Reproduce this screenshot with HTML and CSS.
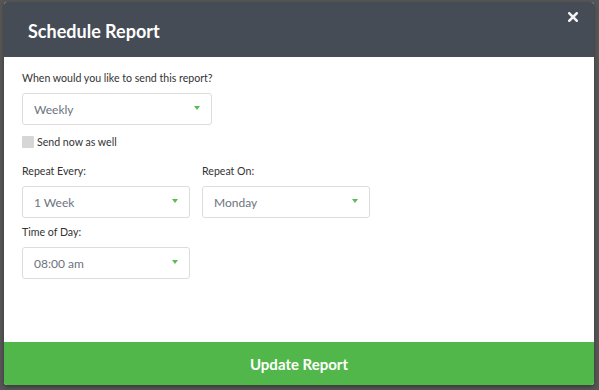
FILE: index.html
```html
<!DOCTYPE html>
<html>
<head>
<meta charset="utf-8">
<link rel="stylesheet" href="styles.css">
</head>
<body>
<div class="backdrop">
  <div class="modal">
    <div class="modal-header">
      <h1 class="title">Schedule Report</h1>
      <svg class="close" width="10" height="10" viewBox="0 0 10 10"><path d="M1.3 1.3L8.7 8.7M8.7 1.3L1.3 8.7" stroke="#f2f2f2" stroke-width="2.6" stroke-linecap="square"/></svg>
    </div>
    <div class="modal-body">
      <div class="label">When would you like to send this report?</div>
      <div class="select wide"><span>Weekly</span><span class="caret"></span></div>
      <label class="check-row"><span class="checkbox"></span><span>Send now as well</span></label>
      <div class="row">
        <div class="field">
          <div class="label">Repeat Every:</div>
          <div class="select"><span>1 Week</span><span class="caret"></span></div>
        </div>
        <div class="field">
          <div class="label">Repeat On:</div>
          <div class="select"><span>Monday</span><span class="caret"></span></div>
        </div>
      </div>
      <div class="field">
        <div class="label">Time of Day:</div>
        <div class="select"><span>08:00 am</span><span class="caret"></span></div>
      </div>
    </div>
    <div class="modal-footer">Update Report</div>
  </div>
</div>
</body>
</html>
```
FILE: styles.css
```css
html, body {
  margin: 0;
  padding: 0;
  height: 100%;
}
body {
  background: #565656;
  font-family: "Lato", "Open Sans", sans-serif;
}
.backdrop {
  padding: 2px 5px 0 4px;
}
.modal {
  width: 590px;
  height: 383px;
  display: flex;
  flex-direction: column;
  background: #fff;
  border-radius: 3px;
  overflow: hidden;
  box-shadow: 0 2px 4px rgba(0,0,0,0.35);
}
.modal-header {
  height: 55px;
  background: #464c56;
  display: flex;
  align-items: center;
  justify-content: space-between;
  padding: 0 16px 0 24px;
  flex: none;
}
.title {
  margin: 0;
  color: #fff;
  font-size: 18px;
  font-weight: 700;
  position: relative;
  top: 1px;
}
.close {
  align-self: flex-start;
  margin-top: 10px;
}
.modal-body {
  flex: 1;
  padding: 13px 18px 0 18px;
}
.label {
  font-size: 10.6px;
  line-height: 16px;
  color: #333;
  margin-bottom: 7px;
}
.select {
  width: 168px;
  height: 32px;
  box-sizing: border-box;
  border: 1px solid #dcdcdc;
  border-radius: 3px;
  display: flex;
  align-items: center;
  justify-content: space-between;
  padding: 0 11px 0 11px;
  font-size: 12px;
  color: #6c7380;
}
.select.wide {
  width: 190px;
}
.caret {
  width: 0;
  height: 0;
  border-left: 3.5px solid transparent;
  border-right: 3.5px solid transparent;
  border-top: 4px solid #5cbb55;
  margin-top: -3px;
}
.check-row {
  display: flex;
  align-items: center;
  gap: 3px;
  margin-top: 11px;
  font-size: 10.6px;
  color: #333;
  height: 12px;
}
.checkbox {
  width: 12px;
  height: 12px;
  background: #d6d6d6;
  border-radius: 1px;
}
.row {
  display: flex;
  gap: 12px;
  margin-top: 15px;
}
.row + .field {
  margin-top: 6px;
}
.modal-footer {
  height: 43px;
  flex: none;
  background: #52b74a;
  color: #fff;
  font-weight: 700;
  font-size: 15px;
  display: flex;
  align-items: center;
  justify-content: center;
}
```
